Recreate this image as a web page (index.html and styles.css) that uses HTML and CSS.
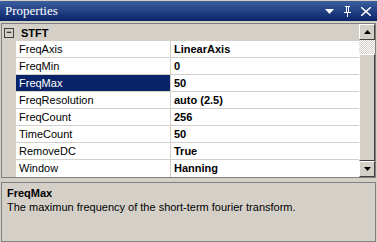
FILE: index.html
```html
<!DOCTYPE html>
<html lang="en">
<head>
    <meta charset="UTF-8">
    <title>Properties</title>
    <link rel="stylesheet" href="styles.css">
</head>
<body>
    <div class="window">
        <div class="titlebar">
            <span class="title">Properties</span>
            <div class="title-buttons">
                <svg width="9" height="5" viewBox="0 0 9 5"><path d="M0 0h9L4.5 5z" fill="#fff"/></svg>
                <svg width="9" height="11" viewBox="0 0 9 11"><path d="M2 0h5v1H6v5h2v1H5v4H4V7H1V6h2V1H2z M4 1h1v5H4z" fill="#fff" fill-rule="evenodd"/></svg>
                <svg width="10" height="9" viewBox="0 0 10 9"><path d="M1 0l4 3.6L9 0h1v1L6.2 4.5 10 8v1H9L5 5.4 1 9H0V8l3.8-3.5L0 1V0z" fill="#fff"/></svg>
            </div>
        </div>

        <div class="grid">
            <div class="rows">
                <div class="category">
                    <span class="toggle">−</span>
                    <span class="cat-name">STFT</span>
                </div>
                <div class="row"><div class="name">FreqAxis</div><div class="value">LinearAxis</div></div>
                <div class="row"><div class="name">FreqMin</div><div class="value">0</div></div>
                <div class="row selected"><div class="name">FreqMax</div><div class="value">50</div></div>
                <div class="row"><div class="name">FreqResolution</div><div class="value">auto (2.5)</div></div>
                <div class="row"><div class="name">FreqCount</div><div class="value">256</div></div>
                <div class="row"><div class="name">TimeCount</div><div class="value">50</div></div>
                <div class="row"><div class="name">RemoveDC</div><div class="value">True</div></div>
                <div class="row"><div class="name">Window</div><div class="value">Hanning</div></div>
            </div>
            <div class="scrollbar">
                <div class="sb-btn"><svg width="7" height="4" viewBox="0 0 7 4"><path d="M3.5 0L7 4H0z" fill="#000"/></svg></div>
                <div class="sb-track"></div>
                <div class="sb-thumb"></div>
                <div class="sb-btn"><svg width="7" height="4" viewBox="0 0 7 4"><path d="M0 0h7L3.5 4z" fill="#000"/></svg></div>
            </div>
        </div>

        <div class="help">
            <div class="help-title">FreqMax</div>
            <div class="help-text">The maximun frequency of the short-term fourier transform.</div>
        </div>
    </div>
</body>
</html>
```

FILE: styles.css
```css
body {
    margin: 0;
    padding: 0;
    background-color: #d4d0c8;
    font-family: 'Liberation Sans', Arial, sans-serif;
    font-size: 11px;
    color: #000;
}
.window {
    width: 377px;
    height: 242px;
    display: flex;
    flex-direction: column;
}
.titlebar {
    height: 21px;
    box-sizing: border-box;
    border-top: 1px solid #d4d0c8;
    background: linear-gradient(#3c5e9e, #0a246a);
    display: flex;
    align-items: center;
    justify-content: space-between;
    padding: 0 6px 0 5px;
}
.title {
    font-family: 'Liberation Serif', 'Times New Roman', serif;
    font-size: 13px;
    color: white;
}
.title-buttons {
    display: flex;
    align-items: center;
    gap: 9px;
}
.grid {
    margin: 2px 0 0 1px;
    width: 375px;
    height: 155px;
    box-sizing: border-box;
    border: 1px solid #808080;
    display: flex;
}
.rows {
    flex: 1;
    display: flex;
    flex-direction: column;
}
.category {
    height: 17px;
    display: flex;
    align-items: center;
}
.toggle {
    width: 8px;
    height: 8px;
    border: 1px solid #404040;
    margin: 0 7px 0 2px;
    font-size: 9px;
    line-height: 7px;
    text-align: center;
    font-weight: bold;
}
.cat-name {
    font-weight: bold;
}
.row {
    height: 17px;
    display: flex;
    margin-left: 14px;
}
.name {
    width: 151px;
    background-color: white;
    border-right: 1px solid #d4d0c8;
    border-bottom: 1px solid #d4d0c8;
    padding-left: 3px;
    line-height: 16px;
}
.value {
    flex: 1;
    background-color: white;
    border-bottom: 1px solid #d4d0c8;
    padding-left: 3px;
    line-height: 16px;
    font-weight: bold;
}
.row:last-child .name,
.row:last-child .value {
    border-bottom: none;
    line-height: 17px;
}
.selected .name {
    background-color: #0a246a;
    color: white;
}
.scrollbar {
    width: 16px;
    display: flex;
    flex-direction: column;
}
.sb-btn {
    height: 16px;
    box-sizing: border-box;
    background-color: #d4d0c8;
    border: 1px solid;
    border-color: #fff #404040 #404040 #fff;
    display: flex;
    align-items: center;
    justify-content: center;
}
.sb-track {
    height: 14px;
    background-image: conic-gradient(#fff 25%, #d4d0c8 0 50%, #fff 0 75%, #d4d0c8 0);
    background-size: 2px 2px;
}
.sb-thumb {
    flex: 1;
    box-sizing: border-box;
    background-color: #d4d0c8;
    border: 1px solid;
    border-color: #fff #404040 #404040 #fff;
}
.help {
    margin: 4px 0 0 1px;
    width: 375px;
    height: 60px;
    box-sizing: border-box;
    border: 1px solid #808080;
    padding: 3px 5px;
}
.help-title {
    font-weight: bold;
    line-height: 14px;
}
.help-text {
    line-height: 14px;
}
```
